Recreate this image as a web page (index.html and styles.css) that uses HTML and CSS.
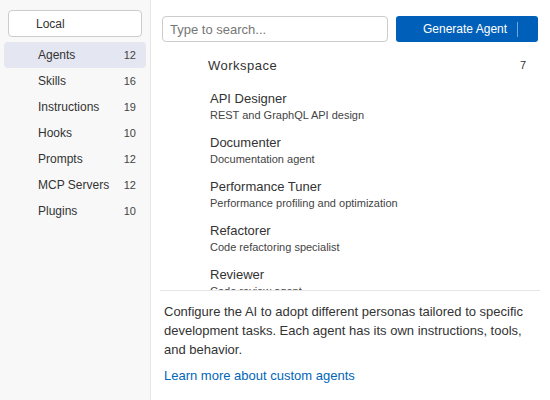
FILE: index.html
```html
<!DOCTYPE html>
<html>
<head>
    <title>Agents</title>
    <link rel="stylesheet" href="styles.css">
</head>
<body>
    <div class="sidebar">
        <button class="scope-button">Local</button>
        <div class="nav">
            <div class="nav-item active"><span>Agents</span><span class="count">12</span></div>
            <div class="nav-item"><span>Skills</span><span class="count">16</span></div>
            <div class="nav-item"><span>Instructions</span><span class="count">19</span></div>
            <div class="nav-item"><span>Hooks</span><span class="count">10</span></div>
            <div class="nav-item"><span>Prompts</span><span class="count">12</span></div>
            <div class="nav-item"><span>MCP Servers</span><span class="count">12</span></div>
            <div class="nav-item"><span>Plugins</span><span class="count">10</span></div>
        </div>
    </div>

    <div class="main">
        <div class="toolbar">
            <input type="text" class="search" placeholder="Type to search...">
            <button class="generate-button"><span>Generate Agent</span><span class="separator"></span></button>
        </div>

        <div class="list">
            <div class="group-header">
                <span>Workspace</span>
                <span class="group-count">7</span>
            </div>
            <div class="agent">
                <div class="agent-name">API Designer</div>
                <div class="agent-desc">REST and GraphQL API design</div>
            </div>
            <div class="agent">
                <div class="agent-name">Documenter</div>
                <div class="agent-desc">Documentation agent</div>
            </div>
            <div class="agent">
                <div class="agent-name">Performance Tuner</div>
                <div class="agent-desc">Performance profiling and optimization</div>
            </div>
            <div class="agent">
                <div class="agent-name">Refactorer</div>
                <div class="agent-desc">Code refactoring specialist</div>
            </div>
            <div class="agent">
                <div class="agent-name">Reviewer</div>
                <div class="agent-desc">Code review agent</div>
            </div>
        </div>

        <div class="footer">
            <p>Configure the AI to adopt different personas tailored to specific development tasks. Each agent has its own instructions, tools, and behavior.</p>
            <a href="#" class="footer-link">Learn more about custom agents</a>
        </div>
    </div>
</body>
</html>
```

FILE: styles.css
```css
* {
    box-sizing: border-box;
}

body {
    margin: 0;
    display: flex;
    height: 100vh;
    overflow: hidden;
    font-family: "Liberation Sans", Arial, sans-serif;
    color: #333;
    background-color: #fff;
}

.sidebar {
    width: 151px;
    flex-shrink: 0;
    background-color: #f8f8f8;
    border-right: 1px solid #e5e5e5;
    padding: 10px 4px;
}

.scope-button {
    display: block;
    width: 134px;
    height: 27px;
    margin: 0 4px;
    padding: 0 0 0 27px;
    text-align: left;
    font-family: inherit;
    font-size: 12px;
    color: #333;
    background-color: #fff;
    border: 1px solid #ccc;
    border-radius: 4px;
}

.nav {
    margin-top: 5px;
}

.nav-item {
    display: flex;
    justify-content: space-between;
    align-items: center;
    height: 26px;
    padding: 0 10px 0 34px;
    font-size: 12px;
    border-radius: 4px;
}

.nav-item.active {
    background-color: #e4e6f1;
}

.nav-item .count {
    font-size: 11px;
    color: #444;
}

.main {
    flex: 1;
    display: flex;
    flex-direction: column;
    min-width: 0;
}

.toolbar {
    display: flex;
    gap: 8px;
    padding: 16px 12px 0 11px;
}

.search {
    width: 226px;
    height: 26px;
    padding: 0 7px;
    font-family: inherit;
    font-size: 13px;
    color: #333;
    border: 1px solid #ccc;
    border-radius: 4px;
    outline: none;
}

.search::placeholder {
    color: #767676;
}

.generate-button {
    flex: 1;
    display: flex;
    align-items: center;
    height: 26px;
    padding: 0 0 0 27px;
    font-family: inherit;
    font-size: 12px;
    color: #fff;
    background-color: #005fb8;
    border: none;
    border-radius: 3px;
}

.generate-button .separator {
    width: 1px;
    height: 15px;
    margin-left: 10px;
    background-color: rgba(255, 255, 255, 0.45);
}

.list {
    flex: 1;
    overflow: hidden;
    padding: 10px 0 0 0;
}

.group-header {
    display: flex;
    justify-content: space-between;
    align-items: center;
    height: 26px;
    padding: 0 24px 0 57px;
    font-size: 13px;
    letter-spacing: 0.5px;
}

.group-count {
    font-size: 11px;
    letter-spacing: 0;
}

.agent {
    padding: 5px 0 7px 59px;
}

.group-header + .agent {
    margin-top: 8px;
}

.agent-name {
    font-size: 13px;
    line-height: 16px;
}

.agent-desc {
    font-size: 11px;
    line-height: 16px;
    color: #444;
}

.footer {
    margin: 0 10px 0 9px;
    padding: 11px 4px 15px 4px;
    border-top: 1px solid #e5e5e5;
    font-size: 13px;
    line-height: 19px;
}

.footer p {
    margin: 0 0 7px 0;
}

.footer-link {
    color: #0066b8;
    text-decoration: none;
}
```
